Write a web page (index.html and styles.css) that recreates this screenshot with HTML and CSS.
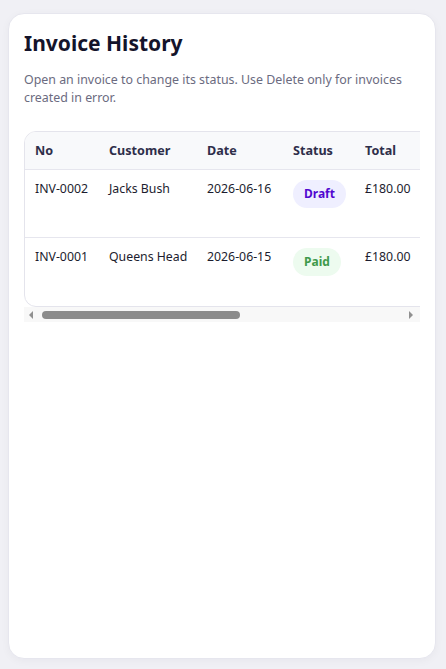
FILE: index.html
```html
<!DOCTYPE html>
<html lang="en">
<head>
    <meta charset="UTF-8">
    <meta name="viewport" content="width=device-width, initial-scale=1.0">
    <title>Invoice History</title>
    <link rel="stylesheet" href="styles.css">
</head>
<body>
    <div class="page">
        <div class="card">
            <h1>Invoice History</h1>
            <p class="hint">Open an invoice to change its status. Use Delete only for invoices created in error.</p>

            <div class="table-scroll">
                <table class="invoices">
                    <thead>
                        <tr>
                            <th class="col-no">No</th>
                            <th class="col-customer">Customer</th>
                            <th class="col-date">Date</th>
                            <th class="col-status">Status</th>
                            <th class="col-total">Total</th>
                            <th class="col-actions"></th>
                        </tr>
                    </thead>
                    <tbody>
                        <tr>
                            <td>INV-0002</td>
                            <td>Jacks Bush</td>
                            <td>2026-06-16</td>
                            <td><span class="badge draft">Draft</span></td>
                            <td>£180.00</td>
                            <td></td>
                        </tr>
                        <tr>
                            <td>INV-0001</td>
                            <td>Queens Head</td>
                            <td>2026-06-15</td>
                            <td><span class="badge paid">Paid</span></td>
                            <td>£180.00</td>
                            <td></td>
                        </tr>
                    </tbody>
                </table>
            </div>
            <div class="scrollbar">
                <span class="arrow left"></span>
                <span class="thumb"></span>
                <span class="arrow right"></span>
            </div>
        </div>
    </div>
</body>
</html>
```

FILE: styles.css
```css
* {
    margin: 0;
    padding: 0;
    box-sizing: border-box;
}

body {
    font-family: 'Noto Sans', 'Open Sans', sans-serif;
    background: #f0f0f5;
    color: #1c1c2e;
}

.page {
    padding: 13px 10px 10px 8px;
    height: 100vh;
}

.card {
    background: #fff;
    border: 1px solid #e6e6ee;
    border-radius: 16px;
    padding: 15px;
    height: 100%;
    box-shadow: 0 2px 8px rgba(20, 20, 60, 0.04);
}

h1 {
    font-size: 21px;
    font-weight: 700;
    color: #14142b;
    line-height: 28px;
}

.hint {
    font-size: 12.4px;
    line-height: 18px;
    color: #6b6b80;
    margin-top: 14px;
}

.table-scroll {
    margin-top: 24px;
    overflow: hidden;
}

.invoices {
    border: 1px solid #e4e4ec;
    border-radius: 12px;
    border-collapse: separate;
    border-spacing: 0;
    table-layout: fixed;
    width: 744px;
    font-size: 12.3px;
}

.invoices th,
.invoices td {
    text-align: left;
    vertical-align: top;
    padding: 10px;
    white-space: nowrap;
}

.invoices th {
    background: #f8f9fb;
    font-weight: 700;
    font-size: 12.6px;
    color: #2e2e4a;
    line-height: 17px;
    border-bottom: 1px solid #e6e6ee;
}

.invoices th:first-child {
    border-top-left-radius: 11px;
}

.invoices td {
    line-height: 18px;
    color: #1c1c2e;
}

.invoices tbody tr {
    height: 68px;
}

.invoices tbody tr:not(:last-child) td {
    border-bottom: 1px solid #e6e6ee;
}

.col-no { width: 74px; }
.col-customer { width: 98px; }
.col-date { width: 86px; }
.col-status { width: 72px; }
.col-total { width: 80px; }

.badge {
    display: inline-block;
    padding: 6px 11px;
    border-radius: 14px;
    font-size: 12px;
    font-weight: 700;
    line-height: 16px;
}

.badge.draft {
    background: #efefff;
    color: #5208d0;
}

.badge.paid {
    background: #edfbef;
    color: #3f9a4c;
}

/* horizontal scrollbar under the table */
.scrollbar {
    display: flex;
    align-items: center;
    height: 15px;
    background: #f8f8f8;
    padding: 0 7px 0 5px;
}

.arrow {
    width: 0;
    height: 0;
    border-top: 4px solid transparent;
    border-bottom: 4px solid transparent;
}

.arrow.left {
    border-right: 4px solid #909090;
}

.arrow.right {
    border-left: 4px solid #909090;
    margin-left: auto;
}

.thumb {
    width: 198px;
    height: 8px;
    margin-left: 9px;
    border-radius: 4px;
    background: #8c8c8c;
}
```
